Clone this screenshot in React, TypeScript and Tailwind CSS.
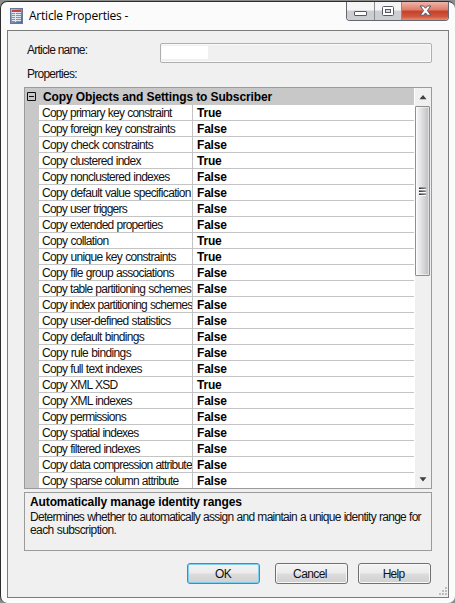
const rows: [string, boolean, string][] = [
  ['Copy primary key constraint', true, 'tracking-[-0.75px]'],
  ['Copy foreign key constraints', false, 'tracking-[-0.7px]'],
  ['Copy check constraints', false, 'tracking-[-0.62px]'],
  ['Copy clustered index', true, 'tracking-[-0.7px]'],
  ['Copy nonclustered indexes', false, 'tracking-[-0.72px]'],
  ['Copy default value specification', false, 'tracking-[-0.66px]'],
  ['Copy user triggers', false, 'tracking-[-0.77px]'],
  ['Copy extended properties', false, 'tracking-[-0.74px]'],
  ['Copy collation', true, 'tracking-[-0.66px]'],
  ['Copy unique key constraints', true, 'tracking-[-0.67px]'],
  ['Copy file group associations', false, 'tracking-[-0.7px]'],
  ['Copy table partitioning schemes', false, 'tracking-[-0.74px]'],
  ['Copy index partitioning schemes', false, 'tracking-[-0.78px]'],
  ['Copy user-defined statistics', false, 'tracking-[-0.7px]'],
  ['Copy default bindings', false, 'tracking-[-0.67px]'],
  ['Copy rule bindings', false, 'tracking-[-0.62px]'],
  ['Copy full text indexes', false, 'tracking-[-0.7px]'],
  ['Copy XML XSD', true, 'tracking-[-0.74px]'],
  ['Copy XML indexes', false, 'tracking-[-0.71px]'],
  ['Copy permissions', false, 'tracking-[-0.74px]'],
  ['Copy spatial indexes', false, 'tracking-[-0.75px]'],
  ['Copy filtered indexes', false, 'tracking-[-0.72px]'],
  ['Copy data compression attribute', false, 'tracking-[-0.78px]'],
  ['Copy sparse column attribute', false, 'tracking-[-0.74px]'],
];

function TitleBar() {
  return (
    <header className="flex h-[28px] shrink-0 items-start">
      <svg className="mt-[6px] ml-[9px] shrink-0" width="13" height="16" viewBox="0 0 13 16">
        <defs>
          <linearGradient id="sheet" x1="0" y1="0" x2="1" y2="1">
            <stop offset="0" stopColor="#b5c3d8" />
            <stop offset="1" stopColor="#48618f" />
          </linearGradient>
        </defs>
        <rect x="0.5" y="0.5" width="12" height="15" fill="url(#sheet)" stroke="#66789a" />
        <rect x="2" y="2" width="9" height="12" fill="#dfe6f0" />
        <rect x="2" y="2" width="9" height="2" fill="#c8453c" />
        <path d="M2 5.5h3M6 5.5h5M2 7.5h3M6 7.5h5M2 9.5h3M6 9.5h5M2 11.5h3M6 11.5h5M2 13.5h3M6 13.5h5" stroke="#8193b3" />
      </svg>
      <h1 className="mt-[5px] ml-[6px] font-['Open_Sans',sans-serif] text-[12px] leading-[18px] tracking-[-0.22px] whitespace-nowrap text-black">
        Article Properties -
      </h1>
      <div className="mr-[6px] ml-auto flex h-[19px] w-[103px] overflow-hidden rounded-b-[4px] border border-t-0 border-[#65686e]">
        <button className="flex w-[28px] items-center justify-center border-r border-[#8b8d92] bg-linear-to-b from-[#f5f5f6] from-45% to-[#cdced1] to-50%">
          <svg width="13" height="6" viewBox="0 0 13 6" className="mt-[5px]">
            <rect x="0.5" y="0.5" width="12" height="4" rx="0.5" fill="#fff" stroke="#555a66" />
          </svg>
        </button>
        <button className="flex w-[27px] items-center justify-center border-r border-[#8b8d92] bg-linear-to-b from-[#f5f5f6] from-45% to-[#cdced1] to-50%">
          <svg width="12" height="11" viewBox="0 0 12 11" className="mt-px">
            <rect x="0.5" y="0.5" width="11" height="9" rx="1" fill="#fff" stroke="#555a66" />
            <rect x="3.5" y="3.5" width="5" height="3" fill="#d9dade" stroke="#555a66" />
          </svg>
        </button>
        <button className="flex flex-1 items-center justify-center bg-[linear-gradient(to_bottom,#efb4a8_0%,#dd7b67_45%,#c5402a_50%,#cf563c_80%,#e58b6f_100%)]">
          <svg width="13" height="12" viewBox="0 0 13 12">
            <path d="M1.2 1H4.6L6.5 3.3 8.4 1H11.8L8.4 5.6 11.8 10.2H8.4L6.5 7.9 4.6 10.2H1.2L4.6 5.6Z" fill="#fff" stroke="#5b5360" strokeWidth="1" strokeLinejoin="round" />
          </svg>
        </button>
      </div>
    </header>
  );
}

function ScrollBar() {
  return (
    <div className="flex w-[17px] shrink-0 flex-col border-l border-white bg-[#f0f0f0]">
      <div className="flex h-[18px] w-full items-center justify-center">
        <svg width="8" height="5" viewBox="0 0 8 5">
          <path d="M4 0 7.5 4.3H0.5Z" fill="#404040" />
        </svg>
      </div>
      <div className="flex h-[170px] w-[15px] items-center justify-center rounded-[1px] border border-[#8e8e8e] bg-linear-to-r from-[#f8f8f8] via-[#e2e2e4] via-40% to-[#bdbdc1] inset-ring inset-ring-white/50">
        <svg width="7" height="9" viewBox="0 0 7 9">
          <defs>
            <linearGradient id="grip" x1="0" y1="0" x2="1" y2="0">
              <stop offset="0" stopColor="#2c2c2c" />
              <stop offset="1" stopColor="#8c8c8c" />
            </linearGradient>
          </defs>
          <path d="M0 2H7V3H0ZM0 5H7V6H0ZM0 8H7V9H0Z" fill="#fff" />
          <path d="M0 0.5H7V2H0ZM0 3.5H7V5H0ZM0 6.5H7V8H0Z" fill="url(#grip)" />
        </svg>
      </div>
      <div className="mt-auto flex h-[17px] w-full items-center justify-center">
        <svg width="8" height="5" viewBox="0 0 8 5">
          <path d="M4 4.5 7.5 0.2H0.5Z" fill="#404040" />
        </svg>
      </div>
    </div>
  );
}

function PropertyGrid() {
  return (
    <section className="mt-[5px] ml-[16px] flex h-[402px] w-[408px] border border-[#9b9b9b] bg-white">
      <div className="flex min-w-0 flex-1 flex-col overflow-hidden">
        <div className="flex h-[17px] shrink-0 items-center bg-[#c8c8c8]">
          <svg className="ml-[2px] shrink-0" width="9" height="9" viewBox="0 0 9 9">
            <path d="M0.5 0.5H8.5V8.5H0.5ZM2 4.5H7" fill="none" stroke="#111" />
          </svg>
          <h2 className="mt-[2px] ml-[7px] text-[12px] leading-[17px] font-bold tracking-[-0.11px] whitespace-nowrap text-black">
            Copy Objects and Settings to Subscriber
          </h2>
        </div>
        <div className="flex min-h-0 flex-1">
          <div className="w-[14px] shrink-0 bg-[#c8c8c8]" />
          <ul className="min-w-0 flex-1">
            {rows.map(([label, enabled, tracking]) => (
              <li key={label} className="flex h-[16px] border-b border-[#c4c4c4] leading-[16px]">
                <div className="w-[154px] shrink-0 border-r border-[#c4c4c4] pl-[3px]">
                  <div className={`overflow-hidden text-[12px] [word-spacing:0.4px] whitespace-nowrap ${tracking}`}>{label}</div>
                </div>
                <div className="pl-[4px] text-[12px] font-bold tracking-[-0.2px] text-black">{enabled ? 'True' : 'False'}</div>
              </li>
            ))}
          </ul>
        </div>
      </div>
      <ScrollBar />
    </section>
  );
}

const buttonBase =
  'h-[21px] w-[73px] rounded-[3px] border bg-[linear-gradient(to_bottom,#f3f3f3_0%,#ebebeb_48%,#dcdcdc_52%,#d0d0d0_100%)] text-[12px] leading-[20px]';

export default function App() {
  return (
    <div className="h-[603px] w-[455px] overflow-hidden bg-[#8d8d8d] pt-px font-['Liberation_Sans',Arial,sans-serif] text-[#111]">
      <div className="flex h-[602px] w-[455px] flex-col rounded-[7px] border-t border-l border-[#2e2e2e] bg-[#fbfbfb]">
        <TitleBar />
        <main className="relative ml-[6px] flex h-[568px] w-[442px] flex-col border border-[#7c7c7c] bg-[#f0f0f0]">
          <div className="flex h-[32px] items-end">
            <label className="mb-[6px] ml-[19px] w-[133px] text-[12px] leading-[14px] tracking-[-0.75px]">Article name:</label>
            <div className="flex h-[20px] w-[272px] rounded-[2px] border border-[#afafaf] bg-[#f0f0f0] pt-[2px] pl-px inset-ring inset-ring-white/60">
              <div className="h-[13px] w-[46px] bg-white" />
            </div>
          </div>
          <div className="mt-[4px] ml-[19px] h-[15px] text-[12px] leading-[15px] tracking-[-0.75px]">Properties:</div>
          <PropertyGrid />
          <section className="mt-[3px] ml-[16px] h-[59px] w-[408px] border border-[#9b9b9b] pt-[2px] pl-[5px]">
            <h3 className="text-[12px] leading-[15px] font-bold tracking-[-0.12px] text-black">Automatically manage identity ranges</h3>
            <p className="mt-px text-[12px] leading-[13px] tracking-[-0.72px] [word-spacing:0.4px] whitespace-nowrap">
              Determines whether to automatically assign and maintain a unique identity range for
              <br />
              <span className="tracking-[-0.6px]">each subscription.</span>
            </p>
          </section>
          <div className="mt-[12px] flex pl-[179px]">
            <button className={`${buttonBase} border-[#3c8fb5] pr-px tracking-[-0.6px] inset-ring inset-ring-[#7fd0ee]`}>OK</button>
            <button className={`${buttonBase} ml-[15px] border-[#707070] pr-[3px] tracking-[-0.6px] inset-ring inset-ring-[#f8f8f8]`}>Cancel</button>
            <button className={`${buttonBase} ml-[10px] border-[#707070] pr-[2px] tracking-[-0.75px] inset-ring inset-ring-[#f8f8f8]`}>Help</button>
          </div>
          <svg className="absolute right-px bottom-[2px]" width="8" height="8" viewBox="0 0 8 8">
            <path d="M6 0h2v2h-2zM3 3h2v2h-2zM6 3h2v2h-2zM0 6h2v2h-2zM3 6h2v2h-2zM6 6h2v2h-2z" fill="#bdbdbd" />
          </svg>
        </main>
      </div>
    </div>
  );
}
